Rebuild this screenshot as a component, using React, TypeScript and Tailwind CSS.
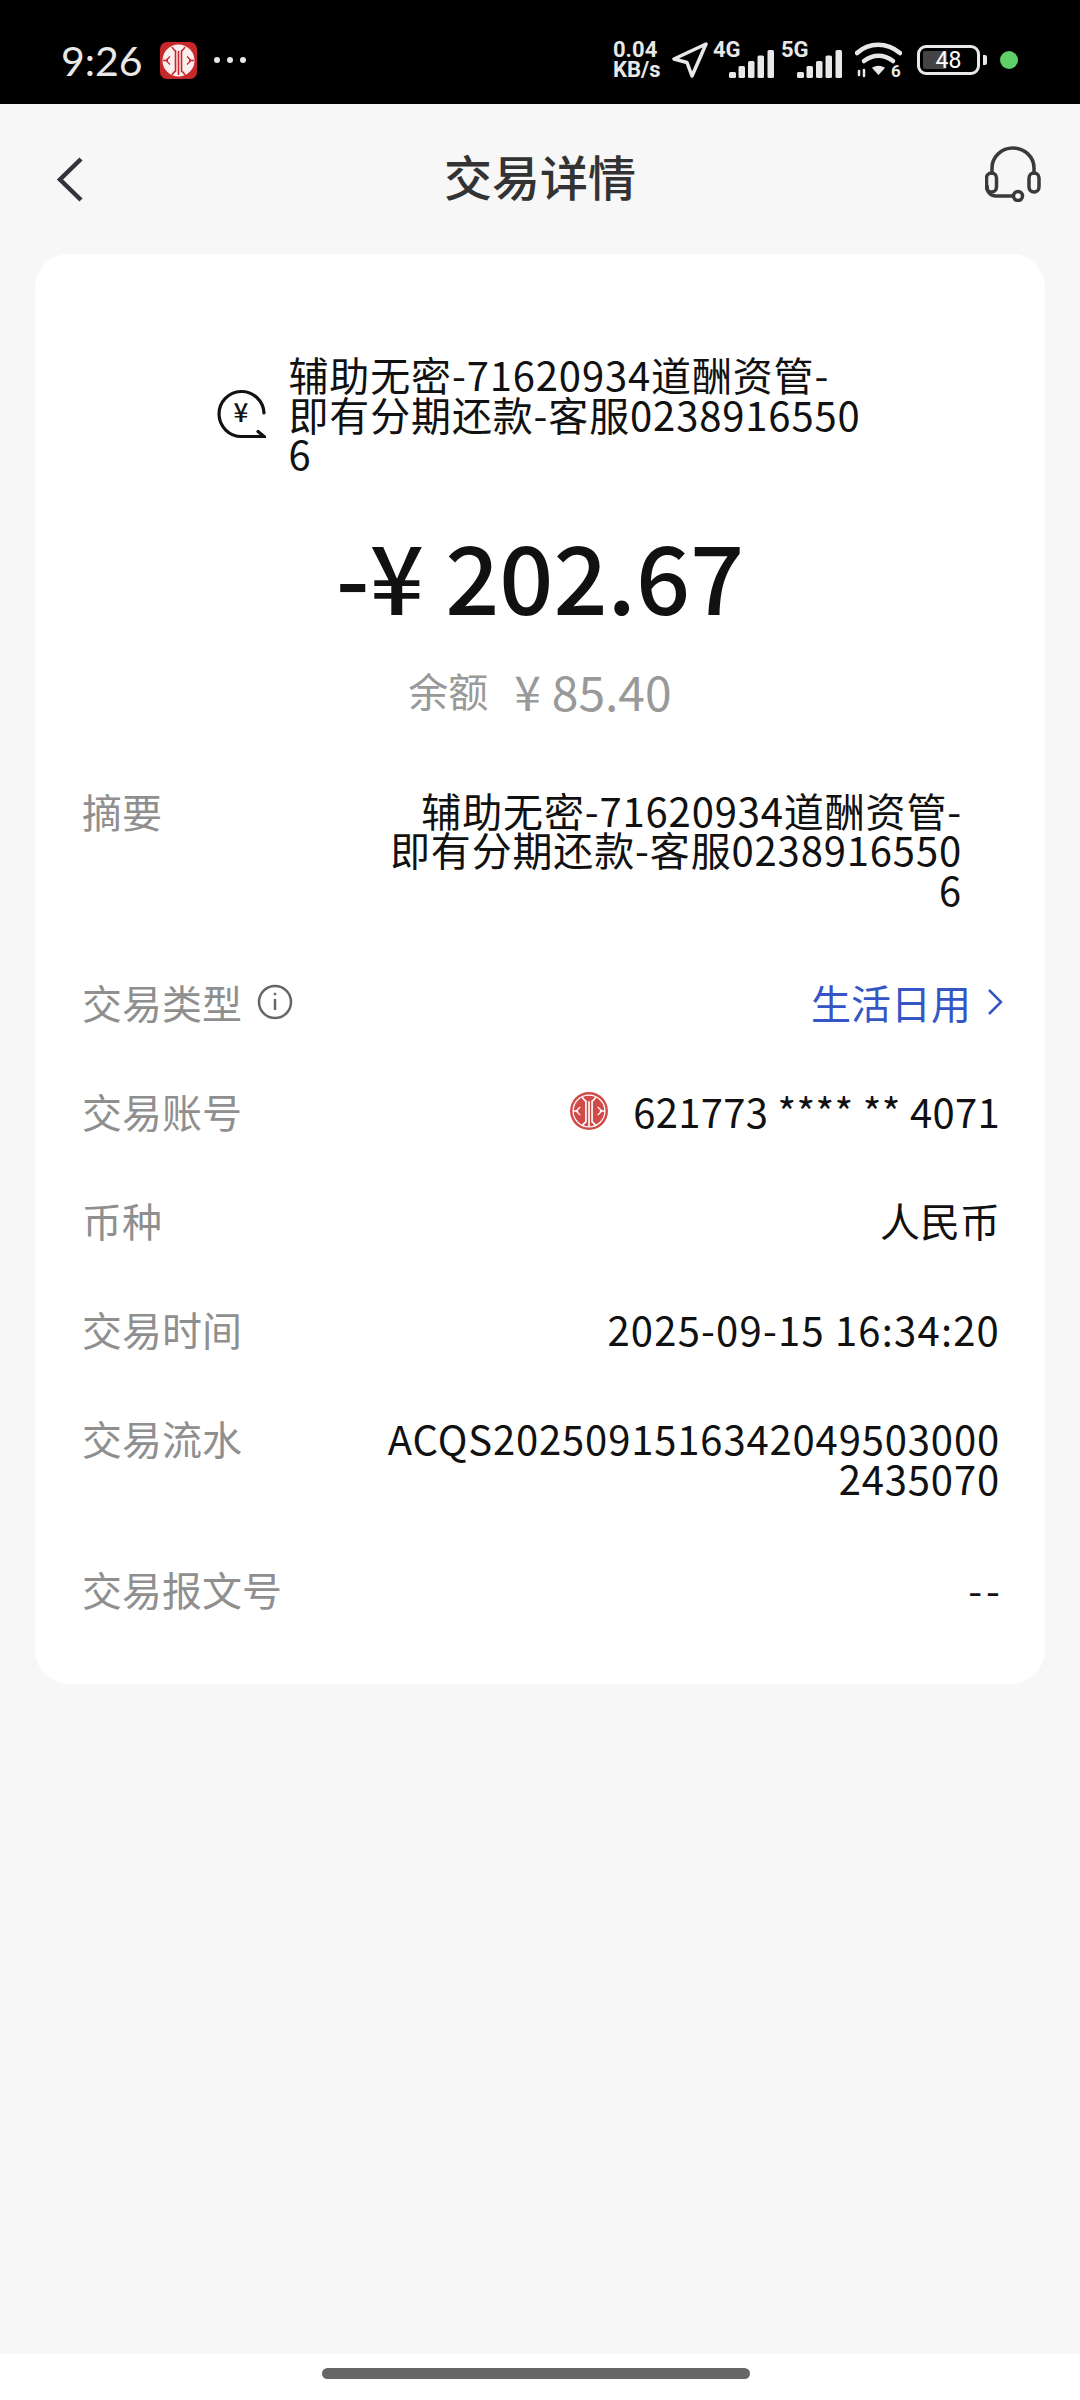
const cjk = "font-['Noto_Sans_CJK_SC','Noto_Sans',sans-serif]";

function CiticLogo({ round }: { round?: boolean }) {
  return (
    <svg viewBox="0 0 37 37" className="h-full w-full">
      {round ? (
        <circle cx="18.5" cy="18.5" r="18.5" fill="#d04a48" />
      ) : (
        <>
          <rect width="37" height="37" rx="7" fill="#c8282b" />
          <circle cx="18.5" cy="18.5" r="16" fill="#fbeeee" />
        </>
      )}
      <g fill="none" stroke={round ? "#fff" : "#c8282b"} strokeWidth="1.6">
        {round && <circle cx="18.5" cy="18.5" r="15.5" strokeWidth="1.2" />}
        <path d="M12 5c1 2 2 3 3.5 4v20c-1.500 1-2.500 2-3.500 4" />
        <path d="M25 5c-1 2-2 3-3.500 4v20c1.500 1 2.500 2 3.500 4" />
        <path d="M18.500 9v24" />
        <path d="M3 18.500h5M10 14.500l-4 4 4 4M34 18.500h-5M27 14.500l4 4-4 4" strokeWidth="1.300" />
      </g>
    </svg>
  );
}

function Signal({ label }: { label: string }) {
  return (
    <div className="relative h-[36px] w-[61px]">
      <span className="absolute left-0 top-[-3px] text-[22px] font-bold leading-[22px] text-[#e8e8e8] font-['Roboto',sans-serif]">
        {label}
      </span>
      <svg viewBox="0 0 45 28" className="absolute bottom-0 right-0 h-[28px] w-[45px]" fill="#e8e8e8">
        <rect x="0" y="22" width="7" height="6" rx="1.500" />
        <rect x="9.500" y="16" width="6.500" height="12" rx="1.500" />
        <rect x="19" y="11" width="6.500" height="17" rx="1.500" />
        <rect x="28.500" y="5.500" width="6.500" height="22.500" rx="1.500" />
        <rect x="38.500" y="0" width="6.500" height="28" rx="1.500" />
      </svg>
    </div>
  );
}

function StatusBar() {
  return (
    <div className="flex h-[104px] items-center bg-black pl-[61px] pr-[62px] pt-[16px] text-[#e8e8e8]">
      <span className="w-[99px] text-[41px] leading-none font-['Lato',sans-serif]">9:26</span>
      <div className="h-[37px] w-[37px]">
        <CiticLogo />
      </div>
      <div className="ml-[17px] flex gap-[7px]">
        <i className="h-[6px] w-[6px] rounded-full bg-[#e8e8e8]" />
        <i className="h-[6px] w-[6px] rounded-full bg-[#e8e8e8]" />
        <i className="h-[6px] w-[6px] rounded-full bg-[#e8e8e8]" />
      </div>
      <div className="ml-auto flex items-center">
        <div className="w-[56px] text-[22px] font-bold leading-[20px] font-['Roboto',sans-serif]">
          <div>0.04</div>
          <div>KB/s</div>
        </div>
        <svg viewBox="0 0 36 36" className="ml-[3px] h-[36px] w-[36px]" fill="none" stroke="#e8e8e8" strokeWidth="3.500" strokeLinejoin="round">
          <path d="M34 2 2 17l13 3.500 5 13.500z" />
        </svg>
        <div className="ml-[5px] flex gap-[7px]">
          <Signal label="4G" />
          <Signal label="5G" />
        </div>
        <svg viewBox="0 0 47 36" className="ml-[13px] h-[36px] w-[47px]" fill="none" stroke="#e8e8e8" strokeLinecap="round">
          <path d="M2 11C14 0 32 0 45 11" strokeWidth="4.500" />
          <path d="M9 19c9-7 20-7 29 0" strokeWidth="4.500" />
          <path d="M18 26c3-2 8-2 11 0l-5.500 6z" fill="#e8e8e8" strokeWidth="1.500" />
          <path d="M4 33v-4M9 28v6" strokeWidth="2.500" />
          <text x="36" y="35" fontSize="17" fontWeight="700" fill="#e8e8e8" stroke="none" fontFamily="Roboto">6</text>
        </svg>
        <div className="relative ml-[15px] flex h-[30px] w-[63px] items-center justify-center rounded-[9px] border-[3px] border-[#e8e8e8]">
          <div className="absolute bottom-[3px] left-[3px] top-[3px] w-[24px] rounded-[2px] bg-[#444]" />
          <span className="relative text-[23px] leading-none text-white font-['Roboto',sans-serif]">48</span>
        </div>
        <div className="ml-[3px] h-[10px] w-[4px] rounded-r-[2px] bg-[#e8e8e8]" />
        <div className="ml-[13px] h-[18px] w-[18px] rounded-full bg-[#5fd068]" />
      </div>
    </div>
  );
}

function Row({ label, children, extra }: { label: string; children: React.ReactNode; extra?: React.ReactNode }) {
  return (
    <div className="flex items-start justify-between">
      <div className="flex items-center text-[#8f8f8f]">
        {label}
        {extra}
      </div>
      {children}
    </div>
  );
}

export default function App() {
  return (
    <div className={`flex h-[2400px] w-[1080px] flex-col bg-[#f7f7f7] ${cjk}`}>
      <StatusBar />

      {/* Header */}
      <div className="relative flex h-[150px] items-start justify-between px-[39px] pt-[42px]">
        <svg viewBox="0 0 28 47" className="ml-[17px] mt-[10px] h-[47px] w-[28px]" fill="none" stroke="#33333d" strokeWidth="4.500">
          <path d="M25 3 4 23.500 25 44" />
        </svg>
        <h1 className="absolute left-0 right-0 top-[38px] text-center text-[48px] font-medium leading-[66px] text-[#333]">交易详情</h1>
        <svg viewBox="0 0 56 56" className="h-[56px] w-[56px]" fill="none" stroke="#3a3a3a" strokeWidth="3.500" strokeLinecap="round">
          <path d="M7 27v-5a21 20 0 0 1 42 0v5" />
          <rect x="1.500" y="27" width="10" height="19" rx="5" />
          <rect x="44" y="27" width="10" height="19" rx="5" />
          <path d="M2 40c0 7 4 10 9 10h17" />
          <circle cx="33" cy="50" r="4.500" />
        </svg>
      </div>

      {/* Card */}
      <div className="mx-[35px] h-[1430px] rounded-[34px] bg-white pt-[101px] text-[40px] leading-[39.5px] text-[#111]">
        <div className="flex items-center justify-center gap-[23px]">
          <svg viewBox="0 0 50 50" className="h-[50px] w-[50px]" fill="none" stroke="#111" strokeWidth="3.200" strokeLinecap="round">
            <path d="M48 24a22.500 22.500 0 1 0-22.500 23.500H48l-6-5" />
            <text x="25" y="33" textAnchor="middle" fontSize="26" fontWeight="500" fill="#111" stroke="none">¥</text>
          </svg>
          <div className="w-[576px] whitespace-nowrap tracking-[0.85px]">
            <div>辅助无密-71620934道酬资管-</div>
            <div>即有分期还款-客服0238916550</div>
            <div>6</div>
          </div>
        </div>

        <div className="mt-[44px] text-center text-[95px] font-medium leading-[112px]">-¥ 202.67</div>

        <div className="mt-[30px] flex items-center justify-center gap-[26px] leading-[60px] text-[#999]">
          <span>余额</span>
          <span className="text-[48px]">¥ 85.40</span>
        </div>

        <div className="mt-[71px] flex flex-col gap-[69px] pl-[47px] pr-[45px] leading-[40px]">
          <Row label="摘要">
            <div className="mb-[4px] mr-[38px] whitespace-nowrap text-right leading-[39.5px] tracking-[0.85px]">
              <div>辅助无密-71620934道酬资管-</div>
              <div>即有分期还款-客服0238916550</div>
              <div>6</div>
            </div>
          </Row>
          <Row
            label="交易类型"
            extra={
              <svg viewBox="0 0 36 36" className="ml-[15px] h-[36px] w-[36px]" fill="none" stroke="#666" strokeWidth="2.500">
                <circle cx="18" cy="18" r="16" />
                <path d="M18 15v11" />
                <circle cx="18" cy="10" r="1" fill="#666" strokeWidth="1" />
              </svg>
            }
          >
            <div className="flex items-center text-[#3555c5]">
              生活日用
              <svg viewBox="0 0 16 28" className="ml-[16px] mr-[-3px] h-[28px] w-[16px]" fill="none" stroke="#3555c5" strokeWidth="2.500">
                <path d="m2 2 12 12L2 26" />
              </svg>
            </div>
          </Row>
          <Row label="交易账号">
            <div className="flex items-center tracking-[0.3px]">
              <div className="mr-[25px] h-[38px] w-[38px]">
                <CiticLogo round />
              </div>
              621773 **** ** 4071
            </div>
          </Row>
          <Row label="币种">
            <div>人民币</div>
          </Row>
          <Row label="交易时间">
            <div className="tracking-[1.2px]">2025-09-15 16:34:20</div>
          </Row>
          <Row label="交易流水">
            <div className="mb-[2px] whitespace-nowrap text-right tracking-[0.85px]">
              <div>ACQS2025091516342049503000</div>
              <div>2435070</div>
            </div>
          </Row>
          <Row label="交易报文号">
            <div className="mr-[-4px] tracking-[4px]">--</div>
          </Row>
        </div>
      </div>

      {/* Home indicator */}
      <div className="mt-auto flex h-[46px] justify-center bg-white pr-[8px] pt-[14px]">
        <div className="h-[11px] w-[428px] rounded-full bg-[#666]" />
      </div>
    </div>
  );
}
